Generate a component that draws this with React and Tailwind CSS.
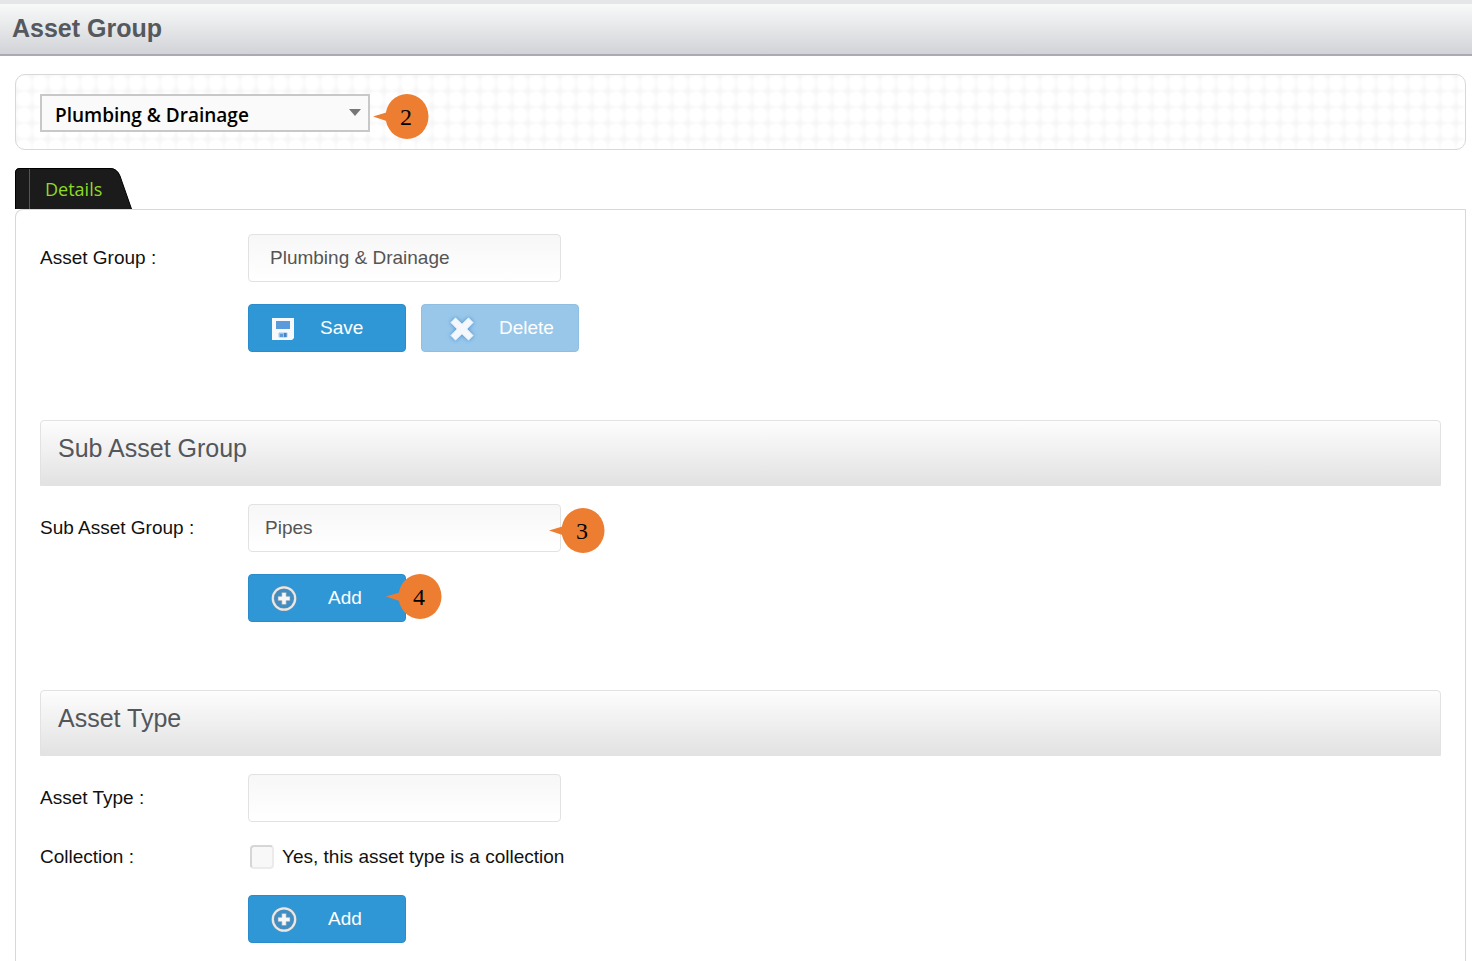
import { useState } from "react";

const Callout = ({ number, className }) => (
  <span className={`pointer-events-none absolute flex h-[45px] w-14 items-center pl-[10px] ${className}`}>
    <svg className="absolute inset-0" width="56" height="45" viewBox="0 0 56 45" aria-hidden="true">
      <ellipse cx="34" cy="22.5" rx="21.5" ry="22.5" fill="#ed7d31" />
      <path d="M0 22.5 L15 18 L15 27.5 Z" fill="#ed7d31" />
    </svg>
    <span className="relative w-full text-center font-['Liberation_Serif',serif] text-2xl leading-6 text-black">
      {number}
    </span>
  </span>
);

const SaveIcon = () => (
  <svg width="24" height="24" viewBox="0 0 24 24" aria-hidden="true">
    <path d="M1 2H23V22L21 24H1Z" fill="#f7fafd" />
    <rect x="5" y="5" width="14" height="8" fill="#5b9bdb" />
    <rect x="7.5" y="16.5" width="9" height="5" rx="1" fill="#9fc3e8" />
    <rect x="9" y="18" width="3" height="3" fill="#5b9bdb" />
    <rect x="13" y="17" width="2.5" height="4" fill="#4384c4" />
  </svg>
);

const DeleteIcon = () => (
  <svg
    className="drop-shadow-[0_0_2px_#4a90d0]"
    width="26"
    height="26"
    viewBox="0 0 26 26"
    aria-hidden="true"
  >
    <path
      d="M6.5 3 L13 9.3 L19.5 3 L24 7.5 L17.7 14 L24 20.5 L19.5 25 L13 18.7 L6.5 25 L2 20.5 L8.3 14 L2 7.5 Z"
      fill="#f4f8fc"
      stroke="#f4f8fc"
      strokeLinejoin="round"
    />
  </svg>
);

const AddIcon = () => (
  <svg width="26" height="26" viewBox="0 0 26 26" aria-hidden="true">
    <circle cx="13" cy="13.5" r="11.2" fill="#3f8fc6" stroke="#7c8f9c" strokeWidth="3" />
    <circle cx="13" cy="13.5" r="11.2" fill="none" stroke="#e6e8ea" strokeWidth="2.2" />
    <path
      d="M10.8 7.5H15.2V11.3H19V15.7H15.2V19.5H10.8V15.7H7V11.3H10.8Z"
      fill="#f6f7f8"
      stroke="#8a9aa5"
      strokeWidth="0.6"
      strokeLinejoin="round"
    />
  </svg>
);

const buttonClass =
  "flex h-12 w-[158px] items-center rounded border border-[#2b8ccb] bg-[#3097d6] pl-[22px] text-white";

const AddButton = () => (
  <button type="button" className={`${buttonClass} gap-[31px]`}>
    <AddIcon />
    Add
  </button>
);

const TextField = ({ id, className = "px-4", ...props }) => (
  <input
    id={id}
    type="text"
    className={`h-12 w-[313px] rounded border border-[#e2e2e2] bg-linear-to-b from-[#f7f7f7] to-white text-[#555] outline-none ${className}`}
    {...props}
  />
);

const Row = ({ label, htmlFor, children }) => (
  <div className="flex items-center">
    <label htmlFor={htmlFor} className="w-52 shrink-0">
      {label}
    </label>
    {children}
  </div>
);

const SectionTitle = ({ children }) => (
  <h2 className="mt-[68px] mb-[18px] flex h-[66px] items-center rounded-t border border-[#e2e2e2] bg-linear-to-b from-[#fdfdfd] to-[#e2e2e2] px-[17px] pb-[10px] text-[25px] text-[#53565b]">
    {children}
  </h2>
);

const App = () => {
  const [group, setGroup] = useState("Plumbing & Drainage");
  const [subGroup, setSubGroup] = useState("Pipes");
  const [assetType, setAssetType] = useState("");
  const [collection, setCollection] = useState(false);

  return (
    <div className="flex min-h-screen flex-col bg-white font-['Liberation_Sans',Arial,sans-serif] text-[19px] leading-6 text-[#111]">
      <header className="flex h-14 items-center border-t-4 border-b-2 border-t-[#e5e6e8] border-b-[#a9aab3] bg-linear-to-b from-[#f8faf9] to-[#d2d3d8] px-3 pb-0.5">
        <h1 className="text-[25px] font-bold text-[#55585c]">Asset Group</h1>
      </header>

      <main className="flex grow flex-col pt-[18px] pr-1.5 pl-[15px]">
        {/* Group picker */}
        <div className="flex h-[76px] items-center rounded-[10px] border border-[#d8d8d8] bg-[radial-gradient(circle,#ffffff_6px,#f6f6f6_10px)] bg-size-[16px_16px] px-6 pt-0.5">
          <div className="relative">
            <select
              aria-label="Asset group"
              className="block h-[38px] w-[330px] appearance-none border-2 border-[#c8c8c8] bg-[#fafafa] pt-1 pl-[13px] font-['Open_Sans','Noto_Sans',sans-serif] text-[19px] leading-6 font-semibold text-black"
            >
              <option>Plumbing &amp; Drainage</option>
            </select>
            <svg
              className="pointer-events-none absolute top-[15px] right-[9px]"
              width="12"
              height="7"
              viewBox="0 0 12 7"
              aria-hidden="true"
            >
              <path d="M0 0H12L6 7Z" fill="#777" />
            </svg>
            <Callout number="2" className="top-0 left-full ml-[3px]" />
          </div>
        </div>

        {/* Tabs */}
        <nav className="mt-[18px] flex">
          <a
            href="#details"
            className="relative flex h-[41px] w-[117px] items-center pl-[30px] font-['Open_Sans','Noto_Sans',sans-serif] text-lg text-[#8fd926]"
          >
            <svg className="absolute inset-0" width="117" height="41" viewBox="0 0 117 41" aria-hidden="true">
              <path d="M0 41V5Q0 0 5 0H95Q102 0 105 8L116.5 41Z" fill="#1b1b1b" />
              <path d="M0.5 41V5Q0.5 0.5 5 0.5H95Q102 0.5 105 8L116.5 41" fill="none" stroke="#000" />
              <path d="M14.5 1V41" stroke="#555" />
            </svg>
            <span className="relative">Details</span>
          </a>
        </nav>

        {/* Details */}
        <section id="details" className="grow rounded-tl-lg border border-b-0 border-[#d8d8d8] px-6 pt-6 pb-[18px]">
          <Row label="Asset Group :" htmlFor="asset-group">
            <TextField
              id="asset-group"
              className="px-[21px]"
              value={group}
              onChange={(e) => setGroup(e.target.value)}
            />
          </Row>
          <div className="mt-[22px] ml-52 flex gap-[15px]">
            <button type="button" className={`${buttonClass} gap-[25px]`}>
              <SaveIcon />
              Save
            </button>
            <button
              type="button"
              disabled
              className="flex h-12 w-[158px] items-center gap-6 rounded border border-[#8fbfe3] bg-[#98c7ea] pl-[27px] text-white"
            >
              <DeleteIcon />
              Delete
            </button>
          </div>

          <SectionTitle>Sub Asset Group</SectionTitle>
          <Row label="Sub Asset Group :" htmlFor="sub-asset-group">
            <div className="relative">
              <TextField
                id="sub-asset-group"
                value={subGroup}
                onChange={(e) => setSubGroup(e.target.value)}
              />
              <Callout number="3" className="top-1 left-full -ml-3" />
            </div>
          </Row>
          <div className="mt-[22px] ml-52 flex">
            <div className="relative">
              <AddButton />
              <Callout number="4" className="top-0 left-full -ml-5" />
            </div>
          </div>

          <SectionTitle>Asset Type</SectionTitle>
          <Row label="Asset Type :" htmlFor="asset-type">
            <TextField id="asset-type" value={assetType} onChange={(e) => setAssetType(e.target.value)} />
          </Row>
          <div className="mt-[23px]">
            <Row label="Collection :" htmlFor="collection">
              <input
                id="collection"
                type="checkbox"
                checked={collection}
                onChange={(e) => setCollection(e.target.checked)}
                className="ml-0.5 size-6 appearance-none rounded-sm border-2 border-[#ebebeb] border-t-[#d6d6d6] border-l-[#d6d6d6] bg-[#f8f8f8] checked:bg-[#3097d6]"
              />
              <label htmlFor="collection" className="ml-2">
                Yes, this asset type is a collection
              </label>
            </Row>
          </div>
          <div className="mt-[26px] ml-52">
            <AddButton />
          </div>
        </section>
      </main>
    </div>
  );
};

export default App;
